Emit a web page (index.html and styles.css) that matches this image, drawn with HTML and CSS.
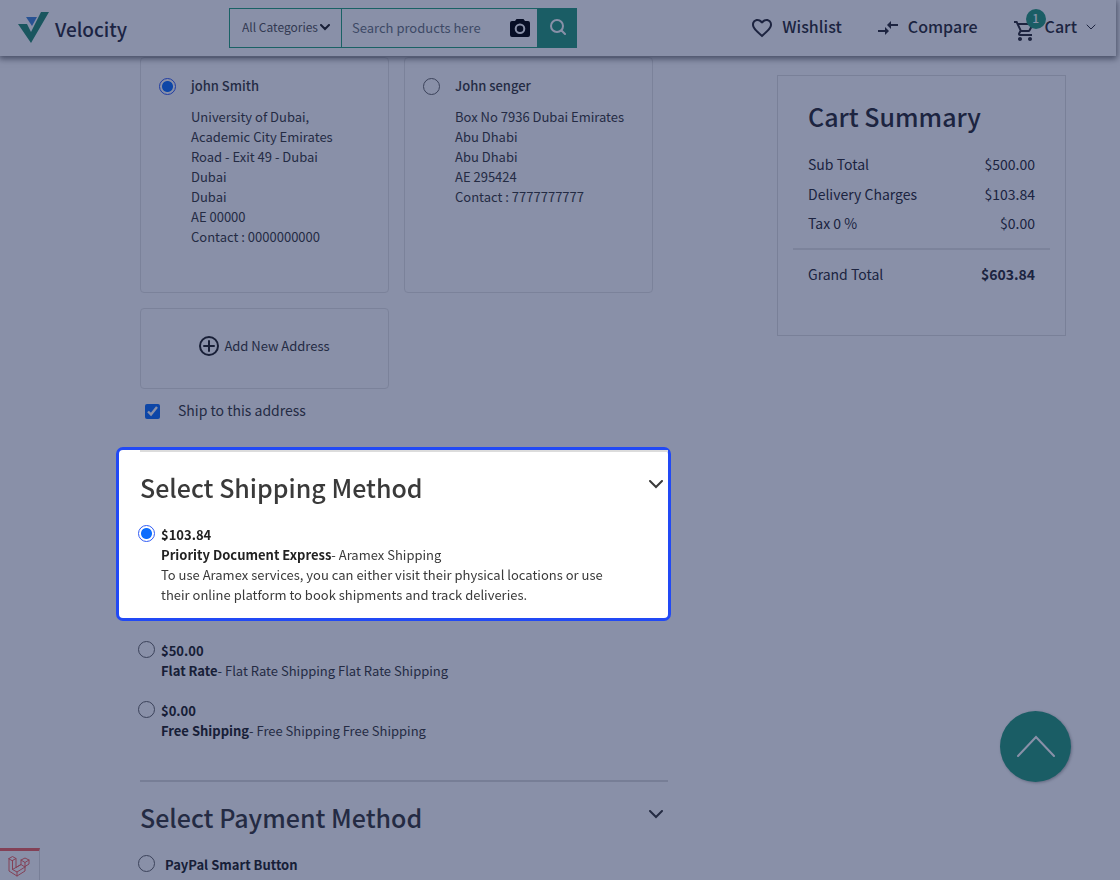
FILE: index.html
```html
<!DOCTYPE html>
<html lang="en">
<head>
<meta charset="utf-8">
<meta name="viewport" content="width=device-width, initial-scale=1">
<title>Velocity - Checkout</title>
<link rel="stylesheet" href="styles.css">
</head>
<body>
<header class="header">
  <a class="brand" href="#">
    <svg width="32" height="32" viewBox="0 0 32 32" aria-hidden="true">
      <path fill="#268e70" d="M1 12h9l4 8L24 0h8L14 31z"/>
      <path fill="#4285d6" d="M9 5h11l-5 9z"/>
    </svg>
    <span>Velocity</span>
  </a>
  <form class="search">
    <div class="category">
      <select aria-label="Category"><option>All Categories</option></select>
      <svg class="category-arrow" width="10" height="7" viewBox="0 0 10 7" aria-hidden="true"><path d="M1 1l4 4 4-4"/></svg>
    </div>
    <div class="query">
      <input type="text" placeholder="Search products here" aria-label="Search products">
      <svg width="20" height="20" viewBox="0 0 20 20" aria-hidden="true">
        <path fill="#000" fill-rule="evenodd" d="M6.500 1h7l1.500 2H18q2 0 2 2v12q0 2-2 2H2q-2 0-2-2V5q0-2 2-2h3zM10 5.500a5.300 5.300 0 1 0 0 10.600a5.300 5.300 0 0 0 0-10.600zM10 7.500a3.300 3.300 0 1 1 0 6.600a3.300 3.300 0 0 1 0-6.600z"/>
      </svg>
    </div>
    <button class="search-button" type="button" aria-label="Search">
      <svg width="18" height="18" viewBox="0 0 18 18" aria-hidden="true"><circle cx="9" cy="8" r="6"/><path d="M13.500 12.500l3.500 3.500"/></svg>
    </button>
  </form>
  <nav class="links">
    <a class="link" href="#">
      <svg width="20" height="20" viewBox="2 2 20 20" aria-hidden="true"><path fill="currentColor" d="M16.500 3c-1.740 0-3.410.81-4.500 2.090C10.910 3.810 9.240 3 7.500 3 4.420 3 2 5.420 2 8.500c0 3.780 3.400 6.860 8.550 11.540L12 21.350l1.450-1.320C18.600 15.360 22 12.280 22 8.500 22 5.420 19.580 3 16.500 3zm-4.400 15.550l-.1.100-.1-.1C7.140 14.240 4 11.390 4 8.500 4 6.500 5.500 5 7.500 5c1.540 0 3.040.99 3.570 2.360h1.870C13.460 5.990 14.960 5 16.500 5c2 0 3.500 1.500 3.500 3.500 0 2.890-3.140 5.740-7.900 10.050z"/></svg>
      <span class="link-label">Wishlist</span>
    </a>
    <a class="link" href="#">
      <svg width="20" height="20" viewBox="2 2 20 20" aria-hidden="true"><path fill="currentColor" d="M9.010 14H2v2h7.010v3L13 15l-3.990-4zm5.980-1v-3H22V8h-7.010V5L11 9z"/></svg>
      <span class="link-label">Compare</span>
    </a>
    <button class="link cart" type="button">
      <span class="cart-icon">
        <svg width="20" height="20" viewBox="1 2 20 20" aria-hidden="true"><path fill="currentColor" d="M15.550 13c.75 0 1.410-.41 1.750-1.030l3.580-6.490A.996.996 0 0 0 20.010 4H5.210l-.94-2H1v2h2l3.600 7.590-1.350 2.440C4.520 15.370 5.480 17 7 17h12v-2H7l1.100-2zM6.160 6h12.150l-2.760 5H8.530zM7 18c-1.100 0-1.990.9-1.990 2S5.900 22 7 22s2-.9 2-2-.9-2-2-2zm10 0c-1.100 0-1.990.9-1.990 2s.89 2 1.990 2 2-.9 2-2-.9-2-2-2z"/></svg>
        <span class="badge">1</span>
      </span>
      <span class="link-label">Cart</span>
      <svg class="cart-arrow" width="10" height="6" viewBox="0 0 10 6" aria-hidden="true"><path d="M1 1l4 4 4-4"/></svg>
    </button>
  </nav>
</header>

<main class="page">
  <div class="checkout">
    <section class="addresses" aria-label="Address">
      <div class="address">
        <input class="radio" type="radio" name="address" id="address-1" checked>
        <div>
          <label class="address-name" for="address-1">john Smith</label>
          <ul class="address-lines">
            <li>University of Dubai,</li>
            <li>Academic City Emirates</li>
            <li>Road - Exit 49 - Dubai</li>
            <li>Dubai</li>
            <li>Dubai</li>
            <li>AE 00000</li>
            <li>Contact : 0000000000</li>
          </ul>
        </div>
      </div>
      <div class="address">
        <input class="radio" type="radio" name="address" id="address-2">
        <div>
          <label class="address-name" for="address-2">John senger</label>
          <ul class="address-lines">
            <li>Box No 7936 Dubai Emirates</li>
            <li>Abu Dhabi</li>
            <li>Abu Dhabi</li>
            <li>AE 295424</li>
            <li>Contact : 7777777777</li>
          </ul>
        </div>
      </div>
      <button class="new-address" type="button">
        <svg width="20" height="20" viewBox="0 0 20 20" aria-hidden="true"><circle cx="10" cy="10" r="9"/><path d="M10 5v10M5 10h10"/></svg>
        <span>Add New Address</span>
      </button>
    </section>
    <div class="ship-here">
      <input class="checkbox" type="checkbox" id="ship-here" checked>
      <label for="ship-here">Ship to this address</label>
    </div>

    <section class="spotlight">
      <div class="section-head">
        <h2>Select Shipping Method</h2>
        <svg width="14" height="9" viewBox="0 0 14 9" aria-hidden="true"><path d="M1 1l6 6 6-6"/></svg>
      </div>
      <div class="option">
        <input class="radio" type="radio" name="shipping" id="aramex" checked>
        <div class="option-text">
          <label for="aramex"><b>$103.84</b></label>
          <p><b>Priority Document Express</b>- Aramex Shipping</p>
          <p class="option-note">To use Aramex services, you can either visit their physical locations or use their online platform to book shipments and track deliveries.</p>
        </div>
      </div>
    </section>
    <div class="options">
      <div class="option">
        <input class="radio" type="radio" name="shipping" id="flat">
        <div class="option-text">
          <label for="flat"><b>$50.00</b></label>
          <p><b>Flat Rate</b>- Flat Rate Shipping Flat Rate Shipping</p>
        </div>
      </div>
      <div class="option">
        <input class="radio" type="radio" name="shipping" id="free">
        <div class="option-text">
          <label for="free"><b>$0.00</b></label>
          <p><b>Free Shipping</b>- Free Shipping Free Shipping</p>
        </div>
      </div>
    </div>

    <section>
      <div class="section-head">
        <h2>Select Payment Method</h2>
        <svg width="14" height="9" viewBox="0 0 14 9" aria-hidden="true"><path d="M1 1l6 6 6-6"/></svg>
      </div>
      <div class="option option-payment">
        <input class="radio" type="radio" name="payment" id="paypal">
        <label class="option-text" for="paypal"><b>PayPal Smart Button</b></label>
      </div>
    </section>
  </div>

  <aside class="summary">
    <h2>Cart Summary</h2>
    <dl>
      <div class="row"><dt>Sub Total</dt><dd>$500.00</dd></div>
      <div class="row"><dt>Delivery Charges</dt><dd>$103.84</dd></div>
      <div class="row"><dt>Tax 0 %</dt><dd>$0.00</dd></div>
      <div class="row total"><dt>Grand Total</dt><dd>$603.84</dd></div>
    </dl>
  </aside>
</main>

<button class="to-top" type="button" aria-label="Back to top">
  <svg width="38" height="22" viewBox="0 0 38 22" aria-hidden="true"><path d="M1 21L19 2l18 19"/></svg>
</button>
<a class="debug" href="#" aria-label="Laravel debug bar">
  <svg width="22" height="22" viewBox="0 0 22 22" aria-hidden="true"><path d="M1 3.500L4.500 1.500L8 3.500L4.500 5.500zM1 3.500V16l8 5 8-5v-4.500l4-2.500V5l-4-2-4 2v4.500L8 12.500V3.500M4.500 5.500v9L9 17l8-5V7.500L13 5M17 7.500L21 5M9 17v4M4.500 14.500l8.500-5 4 2.500"/></svg>
</a>
</body>
</html>
```
FILE: styles.css
```css
* { box-sizing: border-box; }

body {
  min-height: 100vh;
  margin: 0;
  background: #fff;
  color: #3a3a3a;
  font: 400 13px/20px "Noto Sans CJK SC", "Noto Sans", sans-serif;
}

h2, p, dl, dd, ul { margin: 0; padding: 0; }
ul { list-style: none; }
a { color: inherit; text-decoration: none; }
button, input, select { font: inherit; color: inherit; margin: 0; }
button { padding: 0; border: 0; background: none; cursor: pointer; }
svg { display: block; flex: none; fill: none; stroke-linecap: round; }

h2 {
  font-size: 25px;
  font-weight: 500;
  line-height: 38px;
}

/* Header */
.header {
  position: sticky;
  top: 0;
  z-index: 5;
  display: flex;
  align-items: center;
  height: 56px;
  margin-right: 4px;
  padding: 0 20px 0 17px;
  background: #fff;
  box-shadow: 0 2px 6px 1px rgba(0, 0, 0, .5);
}

.brand {
  display: flex;
  align-items: center;
  gap: 6px;
  width: 212px;
  font-size: 19px;
  font-weight: 500;
  color: #2b2b3a;
}

.brand span { padding-top: 2px; }

.search { display: flex; height: 40px; }

.category {
  position: relative;
  width: 113px;
  border: 1px solid #26a37c;
}

.category select {
  width: 100%;
  height: 100%;
  padding: 0 12px 2px;
  border: 0;
  background: transparent;
  appearance: none;
  font-size: 12px;
  color: #555;
}

.category-arrow {
  position: absolute;
  top: 15px;
  right: 11px;
  stroke: #222;
  stroke-width: 2;
  pointer-events: none;
}

.query {
  display: flex;
  align-items: center;
  width: 195px;
  padding-right: 7px;
  border: solid #26a37c;
  border-width: 1px 0;
}

.query input {
  flex: 1;
  min-width: 0;
  height: 100%;
  padding: 0 10px 2px;
  border: 0;
  background: transparent;
  outline: 0;
}

.query input::placeholder { color: #6c757d; opacity: 1; }

.search-button {
  display: grid;
  place-items: center;
  width: 40px;
  padding-bottom: 2px;
  background: #269c7c;
}

.search-button svg { stroke: #fff; stroke-width: 2; }

.links {
  display: flex;
  align-items: center;
  gap: 36px;
  margin-left: auto;
}

.link {
  display: flex;
  align-items: center;
  gap: 10px;
  font-size: 16px;
  font-weight: 500;
  color: #2b2b33;
}

.link-label { padding-bottom: 4px; }

.cart { gap: 9px; }
.cart-icon { position: relative; width: 22px; padding-top: 6px; }
.badge {
  position: absolute;
  top: -6px;
  left: 12px;
  width: 20px;
  height: 20px;
  border-radius: 50%;
  background: #269c7c;
  color: #fff;
  font-size: 12px;
  line-height: 18px;
}
.cart-arrow { margin-bottom: 3px; stroke: #2b2b33; }

/* Page */
.page {
  display: grid;
  grid-template-columns: minmax(0, 1fr) 289px;
  gap: 109px;
  align-items: start;
  padding: 1px 54px 20px 140px;
}

.addresses {
  display: grid;
  grid-template-columns: 1fr 1fr;
  gap: 15px;
  padding-right: 15px;
}

.address, .new-address {
  border: 1px solid #e4e4e4;
  border-radius: 4px;
}

.address {
  display: flex;
  gap: 15px;
  min-height: 236px;
  padding: 18px 18px 20px;
}

.address-name { font-weight: 500; }
.address-lines { padding-top: 11px; }

.radio {
  flex: none;
  width: 17px;
  height: 17px;
  border: 1px solid #666;
  border-radius: 50%;
  background: #fff;
  appearance: none;
}

.address .radio { margin-top: 2px; }

.radio:checked {
  border-color: #2f5bf5;
  background: radial-gradient(circle, #0d6efd 5px, #fff 6px);
}

.new-address {
  display: flex;
  align-items: center;
  justify-content: center;
  gap: 5px;
  height: 81px;
  padding-bottom: 5px;
}

.new-address svg { stroke: #222; stroke-width: 2; }

.ship-here {
  display: flex;
  align-items: center;
  gap: 18px;
  padding: 11px 5px 0;
  font-size: 14px;
}

.ship-here label { padding-bottom: 2px; }

.checkbox { width: 15px; height: 15px; accent-color: #0d6efd; }

/* Highlighted step; the rest of the page is dimmed by its shadow */
.spotlight {
  position: relative;
  z-index: 10;
  margin: 25px -3px 20px -24px;
  padding: 0 0 13px 21px;
  border: 3px solid #2149f5;
  border-radius: 7px;
  background: #fff;
  box-shadow: 0 0 0 9999px rgba(14, 28, 78, .49);
}

.section-head {
  display: flex;
  justify-content: space-between;
  padding: 16px 5px 19px 0;
  border-top: 2px solid #dcdcdc;
}

.section-head svg { margin-top: 12px; stroke: #3a3a3a; stroke-width: 2; }

.option {
  display: flex;
  gap: 6px;
  margin-left: -2px;
}

.option-text { flex: 1; color: #3a3a3a; }
.option-text b { font-weight: 700; color: #222; }
.option-note { max-width: 460px; }
.option-payment { gap: 10px; }

.options {
  display: flex;
  flex-direction: column;
  gap: 20px;
  padding-bottom: 39px;
}

/* Summary */
.summary {
  margin-top: 18px;
  min-height: 261px;
  padding: 21px 15px;
  border: 1px solid #e0e0e0;
  color: #2b2b33;
  font-size: 14px;
}

.summary h2 { padding: 0 15px 15px; }

.row {
  display: flex;
  justify-content: space-between;
  padding: 4px 15px 5px;
}

.row:first-child { padding-bottom: 6px; }

.total {
  margin-top: 10px;
  padding-top: 14px;
  border-top: 2px solid #e6e6e6;
}

.total dd { font-weight: 700; }

.to-top {
  position: fixed;
  right: 49px;
  bottom: 98px;
  display: grid;
  place-items: center;
  width: 71px;
  height: 71px;
  padding-bottom: 2px;
  border-radius: 50%;
  background: #269c7c;
  box-shadow: 1px 1px 3px rgba(0, 0, 0, .3);
}

.to-top svg { stroke: #fff; stroke-width: 2; }

.debug {
  position: fixed;
  left: 0;
  bottom: 0;
  width: 40px;
  height: 32px;
  padding: 4px 8px;
  border-top: 3px solid #f4645f;
  border-right: 1px solid #ddd;
}

.debug svg { stroke: #f4645f; stroke-width: 1; }
```
